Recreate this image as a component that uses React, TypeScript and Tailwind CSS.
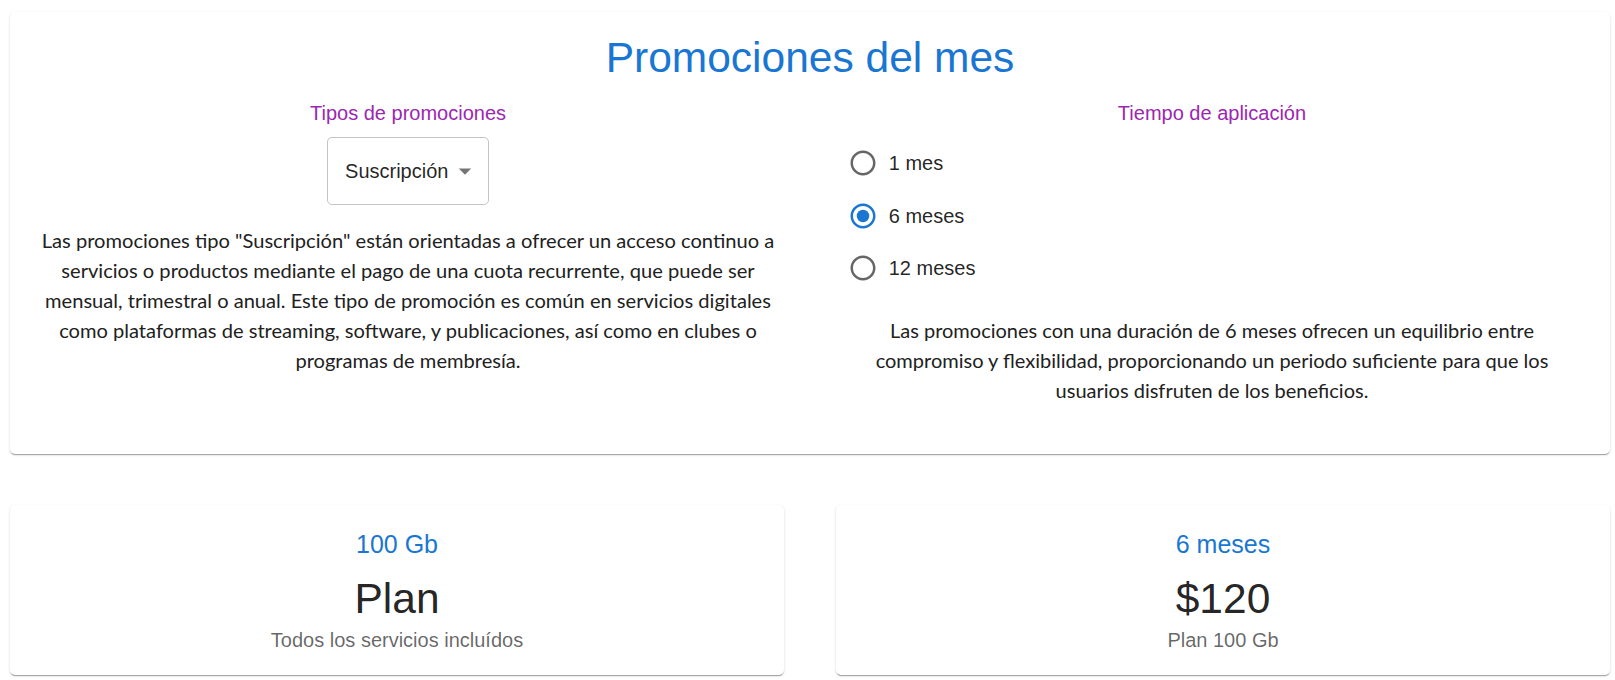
import React from "react";

const arial = { fontFamily: '"Liberation Sans", Arial, sans-serif' };
const para = { fontFamily: 'Lato, "Noto Sans", sans-serif' };

const shadow =
  "shadow-[0_2px_1px_-1px_rgba(0,0,0,0.2),0_1px_1px_0_rgba(0,0,0,0.14),0_1px_3px_0_rgba(0,0,0,0.12)]";

function RadioIcon({ checked }: { checked: boolean }) {
  return (
    <svg viewBox="0 0 24 24" className="w-[30px] h-[30px]" fill={checked ? "#1976d2" : "rgba(0,0,0,0.6)"}>
      <path d="M12 2C6.48 2 2 6.48 2 12s4.48 10 10 10 10-4.48 10-10S17.52 2 12 2zm0 18c-4.42 0-8-3.58-8-8s3.58-8 8-8 8 3.58 8 8-3.58 8-8 8z" />
      {checked && <circle cx="12" cy="12" r="5" />}
    </svg>
  );
}

function Radio({ label, checked }: { label: string; checked?: boolean }) {
  return (
    <label className="flex items-center ml-[-13.75px] mr-[20px] h-[52.5px]">
      <span className="p-[11.25px] flex">
        <RadioIcon checked={!!checked} />
      </span>
      <span className="text-[20px] leading-[1.5] text-[rgba(0,0,0,0.87)]" style={arial}>
        {label}
      </span>
    </label>
  );
}

export default function App() {
  return (
    <div className="bg-white min-h-[680px] pt-[12px] pl-[10px] pr-[5px]">
      <div className={`bg-white rounded-[5px] ${shadow} pt-[20px] pb-[49px]`}>
        <h1
          className="text-center text-[42.5px] leading-[52.5px] text-[#1976d2] font-normal mb-[12px]"
          style={arial}
        >
          Promociones del mes
        </h1>
        <div className="grid grid-cols-2 ml-[-4px] mr-[-4px] items-start">
          <div className="flex flex-col items-center">
            <div className="text-[20px] leading-[32px] text-[#9c27b0]" style={arial}>
              Tipos de promociones
            </div>
            <div className="mt-[8.5px] h-[68px] border border-[rgba(0,0,0,0.23)] rounded-[5px] flex items-center pl-[17.5px] pr-[40px] relative">
              <span className="text-[20px] text-[rgba(0,0,0,0.87)]" style={arial}>
                Suscripción
              </span>
              <svg
                viewBox="0 0 24 24"
                className="absolute right-[8.75px] top-1/2 -translate-y-1/2 w-[30px] h-[30px]"
                fill="rgba(0,0,0,0.54)"
              >
                <path d="M7 10l5 5 5-5z" />
              </svg>
            </div>
            <p className="mt-[20px] text-center text-[20.1px] leading-[30px] text-[#212121]" style={para}>
              Las promociones tipo "Suscripción" están orientadas a ofrecer un acceso continuo a
              <br />
              servicios o productos mediante el pago de una cuota recurrente, que puede ser
              <br />
              mensual, trimestral o anual. Este tipo de promoción es común en servicios digitales
              <br />
              como plataformas de streaming, software, y publicaciones, así como en clubes o
              <br />
              programas de membresía.
            </p>
          </div>
          <div className="flex flex-col">
            <div className="text-center text-[20px] leading-[32px] text-[#9c27b0]" style={arial}>
              Tiempo de aplicación
            </div>
            <div className="mt-[8.5px] pl-[40px] flex flex-col">
              <Radio label="1 mes" />
              <Radio label="6 meses" checked />
              <Radio label="12 meses" />
            </div>
            <p className="mt-[20px] text-center text-[20px] leading-[30px] text-[#212121]" style={para}>
              Las promociones con una duración de 6 meses ofrecen un equilibrio entre
              <br />
              compromiso y flexibilidad, proporcionando un periodo suficiente para que los
              <br />
              usuarios disfruten de los beneficios.
            </p>
          </div>
        </div>
      </div>

      <div className="grid grid-cols-2 gap-[52px] mt-[51px]">
        {[
          { top: "100 Gb", main: "Plan", sub: "Todos los servicios incluídos" },
          { top: "6 meses", main: "$120", sub: "Plan 100 Gb" },
        ].map((c) => (
          <div key={c.main} className={`bg-white rounded-[5px] ${shadow} pt-[19px] pb-[20px] text-center`} style={arial}>
            <div className="text-[25px] leading-[40px] text-[#1976d2]">{c.top}</div>
            <div className="mt-[9px] text-[42.5px] leading-[52.5px] text-[rgba(0,0,0,0.87)]">{c.main}</div>
            <div className="text-[20px] leading-[30px] text-[rgba(0,0,0,0.6)]">{c.sub}</div>
          </div>
        ))}
      </div>
    </div>
  );
}
